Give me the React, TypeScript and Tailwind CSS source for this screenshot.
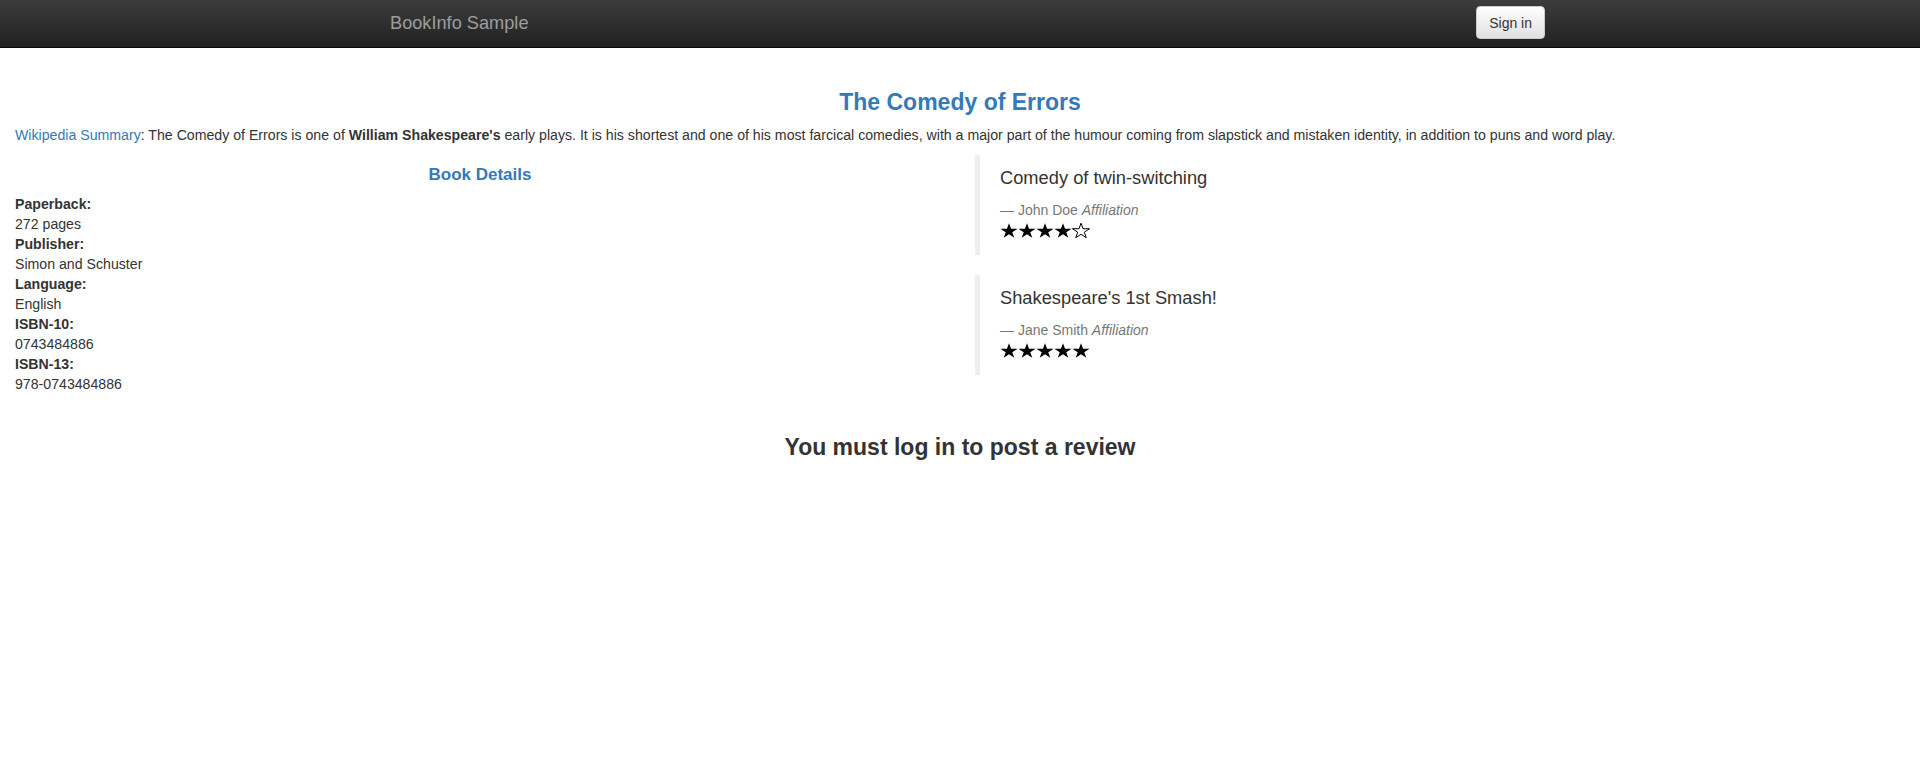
const FONT = "font-['Liberation_Sans',Arial,sans-serif]";

const DETAILS: { label: string; value: string }[] = [
  { label: "Paperback:", value: "272 pages" },
  { label: "Publisher:", value: "Simon and Schuster" },
  { label: "Language:", value: "English" },
  { label: "ISBN-10:", value: "0743484886" },
  { label: "ISBN-13:", value: "978-0743484886" },
];

const REVIEWS = [
  { text: "Comedy of twin-switching", author: "John Doe", stars: 4 },
  { text: "Shakespeare's 1st Smash!", author: "Jane Smith", stars: 5 },
];

const STAR_POINTS =
  "0,-1 0.2245,-0.309 0.951,-0.309 0.363,0.118 0.588,0.809 0,0.382 -0.588,0.809 -0.363,0.118 -0.951,-0.309 -0.2245,-0.309";

function Star({ filled }: { filled: boolean }) {
  return (
    <svg
      width="18"
      height="15"
      viewBox="-1 -1.02 2 1.86"
      preserveAspectRatio="none"
      aria-hidden="true"
      className="shrink-0"
    >
      {filled ? (
        <polygon points={STAR_POINTS} fill="#000" />
      ) : (
        <polygon
          points={STAR_POINTS}
          fill="none"
          stroke="#000"
          strokeWidth={1}
          vectorEffect="non-scaling-stroke"
        />
      )}
    </svg>
  );
}

export default function App() {
  return (
    <div className={`${FONT} min-h-screen bg-white text-[14.15px] leading-[20px] text-[#333]`}>
      {/* Navbar */}
      <nav className="h-[48px] border-b border-[#080808] bg-gradient-to-b from-[#3c3c3c] to-[#222]">
        <div className="mx-auto flex h-full w-[1170px] items-center justify-between pl-[15px]">
          <span className="-mt-[2px] text-[18.2px] leading-[20px] text-[#9d9d9d]">BookInfo Sample</span>
          <button className="-mt-[2px] h-[33px] rounded-[4px] border border-[#ccc] bg-gradient-to-b from-white to-[#e0e0e0] px-[12px] text-[14px] text-[#333] shadow-[inset_0_1px_0_rgba(255,255,255,0.15),0_1px_1px_rgba(0,0,0,0.075)]">
            Sign in
          </button>
        </div>
      </nav>

      <div className="px-[15px] pt-[21px]">
        <h3 className="mt-[20px] mb-[10px] text-center text-[23px] leading-[26px] font-bold text-[#337ab7]">
          The Comedy of Errors
        </h3>
        <p className="mb-[10px]">
          <a className="text-[#337ab7]">Wikipedia Summary</a>: The Comedy of Errors is one of{" "}
          <b>William Shakespeare's</b> early plays. It is his shortest and one of his most farcical
          comedies, with a major part of the humour coming from slapstick and mistaken identity, in
          addition to puns and word play.
        </p>

        <div className="-mx-[15px] flex">
          {/* Book details */}
          <div className="w-1/2 px-[15px]">
            <h4 className="mt-[10px] mb-[9px] text-center text-[17px] leading-[20px] font-bold text-[#337ab7]">
              Book Details
            </h4>
            <dl className="mb-[20px]">
              {DETAILS.map((d) => (
                <div key={d.label}>
                  <dt className="font-bold">{d.label}</dt>
                  <dd>{d.value}</dd>
                </div>
              ))}
            </dl>
          </div>

          {/* Reviews */}
          <div className="w-1/2 px-[15px]">
            {REVIEWS.map((r) => (
              <blockquote
                key={r.author}
                className="mb-[20px] border-l-[5px] border-[#eee] px-[20px] pt-[10px] pb-[14px]"
              >
                <p className="mb-[9px] text-[18.3px] leading-[26px]">{r.text}</p>
                <small className="block text-[14px] leading-[20px] text-[#777]">
                  {"\u2014\u00a0"}
                  {r.author} <cite className="italic">Affiliation</cite>
                </small>
                <div className="flex h-[21px] items-center">
                  {[0, 1, 2, 3, 4].map((i) => (
                    <Star key={i} filled={i < r.stars} />
                  ))}
                </div>
              </blockquote>
            ))}
          </div>
        </div>

        <h3 className="mt-[20px] text-center text-[23px] leading-[26px] font-bold text-[#333]">
          You must log in to post a review
        </h3>
      </div>
    </div>
  );
}
